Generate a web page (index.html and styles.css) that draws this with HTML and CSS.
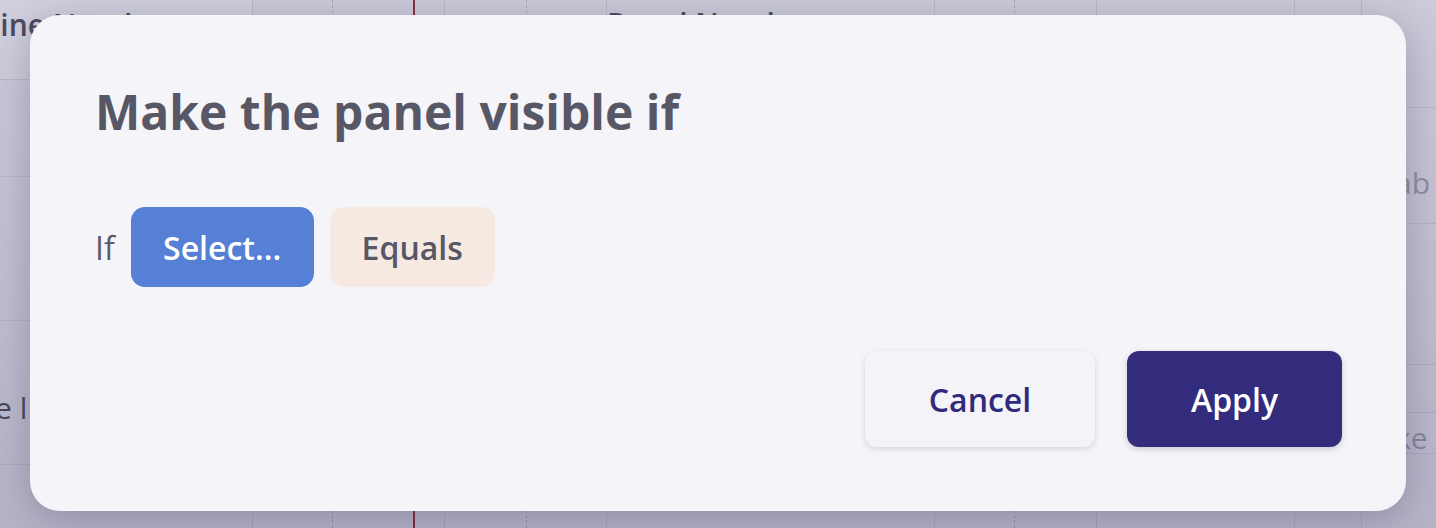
FILE: index.html
```html
<!DOCTYPE html>
<html lang="en">
<head>
    <meta charset="UTF-8">
    <title>Panel visibility</title>
    <link rel="stylesheet" href="styles.css">
</head>
<body>
<div id="app">
    <div class="col c1">
        <div class="cell head"><span class="frag">Line Number</span></div>
        <div class="cell r2"></div>
        <div class="cell r3"></div>
        <div class="cell r4"><span class="frag low">Table l</span></div>
    </div>
    <div class="col c2 dash"></div>
    <div class="col c3 red"></div>
    <div class="col c4"></div>
    <div class="col c5 dash"></div>
    <div class="col c6"></div>
    <div class="col c7"><div class="cell head"><span class="frag">Panel Number</span></div></div>
    <div class="col c8 dash"></div>
    <div class="col c9"></div>
    <div class="col c10"></div>
    <div class="col c11"></div>
    <div class="col c12">
        <div class="cell rr1"></div>
        <div class="cell rr2"><span class="frag soft">ab</span></div>
        <div class="cell rr3"></div>
        <div class="cell rr4"></div>
        <div class="cell rr5"><span class="frag soft">ke</span></div>
    </div>
</div>
<div id="shade"></div>

<div id="dialog">
    <h1 class="title">Make the panel visible if</h1>
    <div class="rule">
        <span class="label">If</span>
        <div class="chip select">Select...</div>
        <div class="chip equals">Equals</div>
    </div>
    <div class="footer">
        <div class="btn cancel">Cancel</div>
        <div class="btn apply">Apply</div>
    </div>
</div>
</body>
</html>
```

FILE: styles.css
```css
*{
    margin: 0;
    padding: 0;
    box-sizing: border-box;
}
html, body{
    width: 1436px;
    height: 528px;
    overflow: hidden;
}
body{
    font-family: "Open Sans", "Noto Sans", sans-serif;
    background: #cfcedc;
    position: relative;
}

/* the app behind the dialog */
#app{
    display: grid;
    grid-template-columns: 253px 80px 82px 30px 82px 80px 328px 80px 82px 198px 67px 74px;
    height: 528px;
}
#app .col{
    border-right: 1px solid #bdbccd;
    display: flex;
    flex-direction: column;
}
#app .col.dash{
    border-right: 1px dashed #aaa9bb;
}
#app .col.red{
    border-right: 2px solid #8e2d3b;
}
#app .c12{
    border-right: none;
}
#app .cell{
    border-bottom: 1px solid #bfbecf;
    white-space: nowrap;
}
.frag{
    font-size: 30px;
    line-height: 30px;
    color: #4d4c5e;
    font-weight: 600;
    display: block;
}
.c1 .head{
    height: 80px;
    background: #d4d3e0;
}
.c1 .head .frag{
    margin: 10px 0 0 -16px;
}
.c1 .r2{
    height: 97px;
}
.c1 .r3{
    height: 144px;
    border-bottom: 1px dashed #a9a8ba;
}
.c1 .r4{
    height: 144px;
}
.c1 .r4 .frag{
    margin: 72px 0 0 -64px;
    font-weight: 400;
}
.c7 .head{
    border: none;
}
.c7 .head .frag{
    margin: 9px 0 0 0;
}
.c12 .rr1{
    height: 108px;
}
.c12 .rr2{
    height: 116px;
}
.c12 .rr2 .frag, .c12 .rr5 .frag{
    margin: 60px 0 0 33px;
    color: #9695a8;
    font-weight: 400;
}
.c12 .rr3{
    height: 141px;
}
.c12 .rr4{
    height: 48px;
}
.c12 .rr5 .frag{
    margin: 10px 0 0 33px;
}

#shade{
    position: absolute;
    left: 0;
    top: 0;
    right: 0;
    bottom: 0;
    background: linear-gradient(180deg, rgba(60, 55, 100, 0.02) 0%, rgba(50, 45, 90, 0.16) 100%);
}

/* dialog */
#dialog{
    position: absolute;
    left: 30px;
    top: 15px;
    width: 1376px;
    height: 496px;
    background: #f5f4f8;
    border-radius: 30px;
    box-shadow: 0 8px 40px rgba(40, 36, 80, 0.28);
    padding: 69px 64px 64px 65px;
    display: flex;
    flex-direction: column;
}
.title{
    font-size: 48px;
    line-height: 56px;
    font-weight: 700;
    color: #575766;
}
.rule{
    margin-top: 67px;
    display: flex;
    align-items: center;
    gap: 16px;
    height: 80px;
}
.label{
    font-size: 32px;
    font-weight: 500;
    color: #5b5b6a;
}
.chip{
    height: 80px;
    border-radius: 14px;
    font-size: 32px;
    font-weight: 600;
    display: flex;
    align-items: center;
    justify-content: center;
}
.select{
    width: 183px;
    background: #5580d6;
    color: #fff;
}
.equals{
    width: 165px;
    background: #f6e9e2;
    color: #575766;
}
.footer{
    margin-top: 64px;
    display: flex;
    justify-content: flex-end;
    gap: 32px;
}
.btn{
    height: 96px;
    border-radius: 12px;
    font-size: 32px;
    font-weight: 600;
    display: flex;
    align-items: center;
    justify-content: center;
}
.cancel{
    width: 230px;
    background: #f4f3f7;
    color: #312a7c;
    box-shadow: 0 2px 6px rgba(30, 25, 70, 0.14);
}
.apply{
    width: 215px;
    background: #332c7c;
    color: #fff;
    box-shadow: 0 2px 6px rgba(30, 25, 70, 0.2);
}
```
